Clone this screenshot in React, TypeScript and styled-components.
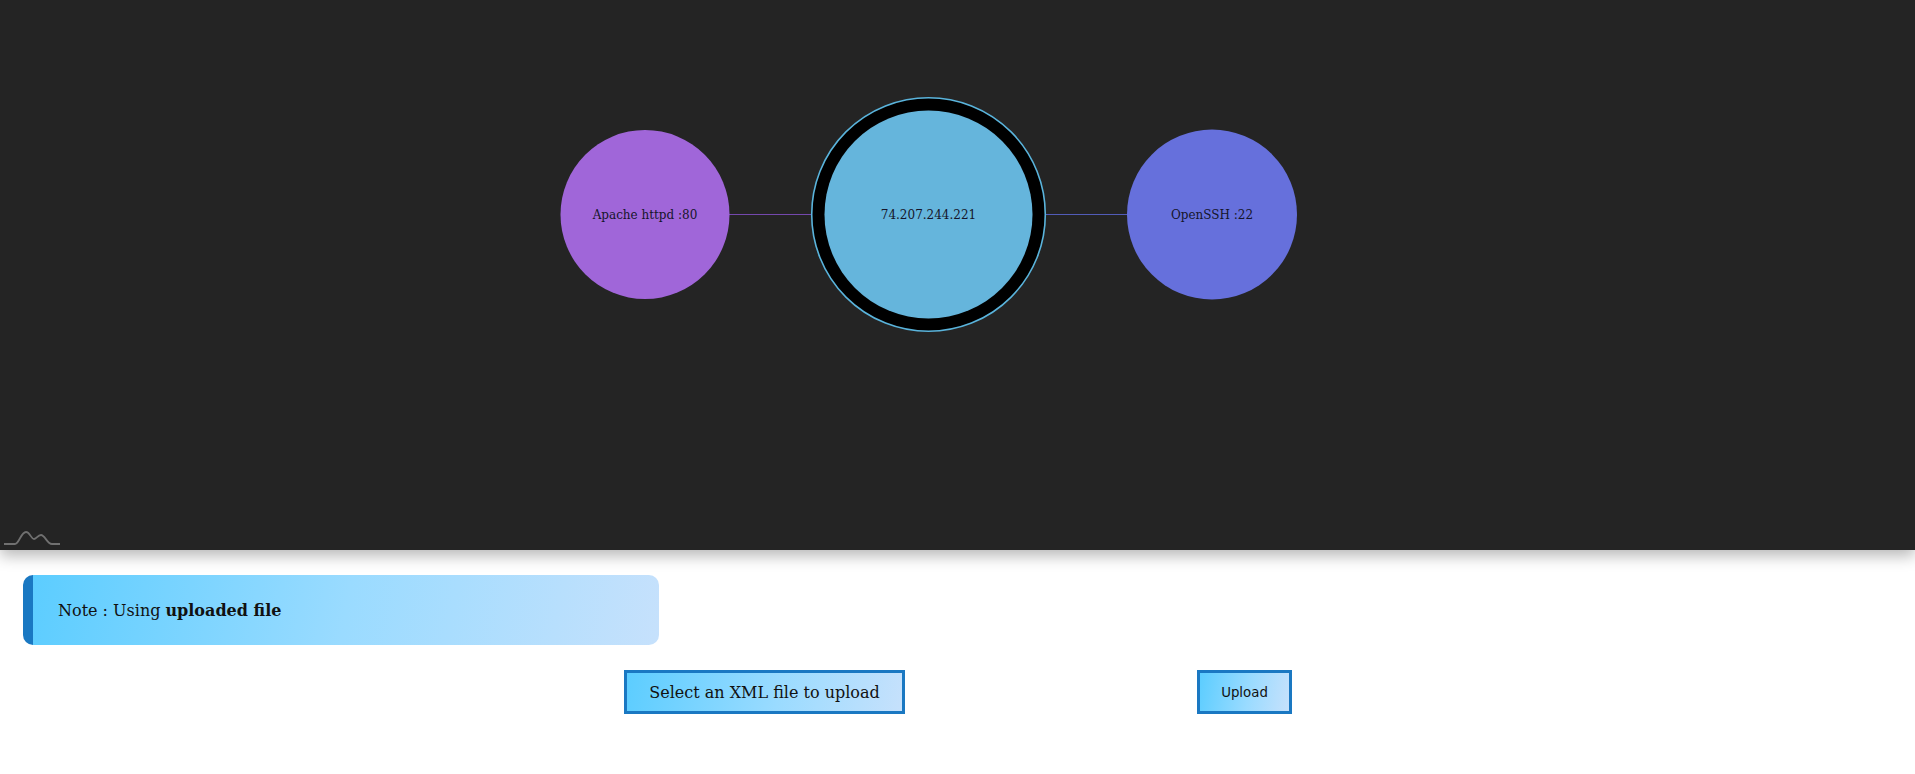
import React from "react";
import styled, {createGlobalStyle} from "styled-components";

const GlobalStyle = createGlobalStyle`
  body {
    margin: 0;
    background: #ffffff;
    font-family: "DejaVu Serif", serif;
  }
`

const GraphPanel = styled.div`
  position: relative;
  height: 550px;
  background: #242424;
  box-shadow: 0 6px 14px rgba(0, 0, 0, 0.28);
  overflow: hidden;
`
const Logo = styled.svg`
  position: absolute;
  left: 3px;
  bottom: 2px;
`
const Content = styled.div`
  padding: 25px 23px 0;
`
const Note = styled.div`
  width: 636px;
  height: 70px;
  display: flex;
  align-items: center;
  padding-left: 25px;
  box-sizing: border-box;
  border-left: 10px solid #1a78c2;
  border-radius: 10px;
  background: linear-gradient(100deg, #5ccdff 0%, #9adbff 50%, #c6e1fc 100%);
  font-size: 16px;
  color: #111;
  > b{
    margin-left: 5px;
  }
`
const Actions = styled.div`
  display: flex;
  align-items: center;
  gap: 292px;
  margin-top: 25px;
  padding-left: 601px;
`
const GradientButton = styled.button<{ $serif?: boolean }>`
  height: 44px;
  box-sizing: border-box;
  border: 3px solid #1a78c2;
  border-radius: 0;
  background: linear-gradient(100deg, #5ccdff 0%, #9adbff 55%, #c6e1fc 100%);
  color: #111;
  font-family: ${p => p.$serif ? '"DejaVu Serif", serif' : '"DejaVu Sans", sans-serif'};
  font-size: ${p => p.$serif ? '16px' : '13.333px'};
  padding: 0;
  cursor: pointer;
`

type GraphNode = { x: number, y: number, r: number, color: string, label: string }

const nodes: GraphNode[] = [
    {x: 645, y: 214.5, r: 84.5, color: "#a066d9", label: "Apache httpd :80"},
    {x: 1212, y: 214.5, r: 85, color: "#6670dc", label: "OpenSSH :22"},
]

function Graph() {
    return (
        <GraphPanel>
            <svg width="1915" height="550">
                <line x1="729" y1="214.5" x2="812" y2="214.5" stroke="#7448ad" strokeWidth="1"/>
                <line x1="1045" y1="214.5" x2="1128" y2="214.5" stroke="#525cb8" strokeWidth="1"/>
                {nodes.map(n =>
                    <g key={n.label}>
                        <circle cx={n.x} cy={n.y} r={n.r} fill={n.color}/>
                        <text x={n.x} y={n.y + 4} textAnchor="middle" fontFamily="DejaVu Serif, serif"
                              fontSize="12" fill="#15152a">{n.label}</text>
                    </g>
                )}
                <circle cx="928.5" cy="214.5" r="116.8" fill="#000" stroke="#5ab4dc" strokeWidth="1.6"/>
                <circle cx="928.5" cy="214.5" r="104" fill="#65b5dc"/>
                <text x="928.5" y="218.5" textAnchor="middle" fontFamily="DejaVu Serif, serif"
                      fontSize="12" fill="#15152a">74.207.244.221</text>
            </svg>
            <Logo width="58" height="18" viewBox="0 0 58 18">
                <path d="M1 14 H12 C16 14 18 2 23 2 C27 2 28 9 31 9 C33 9 35 5 38 5 C42 5 44 14 49 14 H57"
                      fill="none" stroke="#707070" strokeWidth="1.8"/>
            </Logo>
        </GraphPanel>
    )
}

export default function App() {
    return (
        <>
            <GlobalStyle/>
            <Graph/>
            <Content>
                <Note>Note : Using<b>uploaded file</b></Note>
                <Actions>
                    <GradientButton $serif style={{width: 281}}>Select an XML file to upload</GradientButton>
                    <GradientButton style={{width: 95}}>Upload</GradientButton>
                </Actions>
            </Content>
        </>
    )
}
